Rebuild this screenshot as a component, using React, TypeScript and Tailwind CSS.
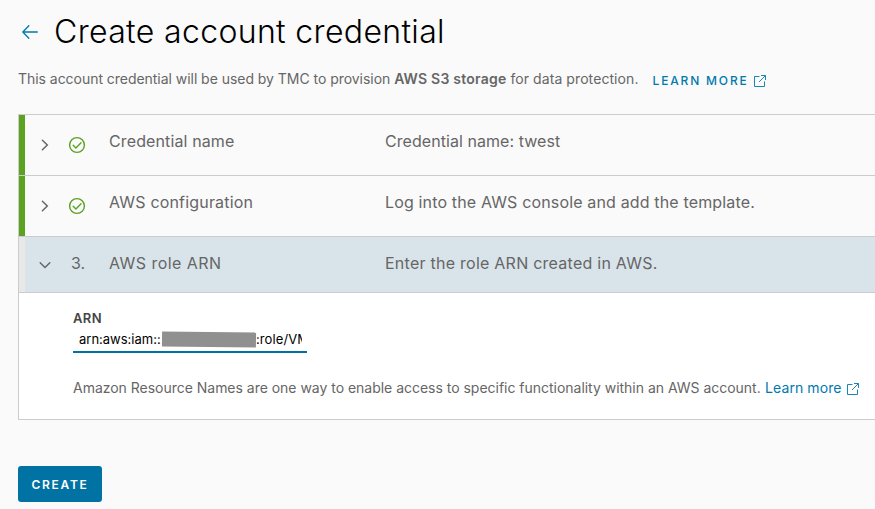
import React from "react";

function ExternalIcon({ className = "" }: { className?: string }) {
  return (
    <svg className={className} width="12" height="12" viewBox="0 0 12 12" fill="none" stroke="#0079ad" strokeWidth="0.9">
      <path d="M5.5 1.5H.5v10h10V6.5M7 .5h4.5V5M11.4.6 5 7" />
    </svg>
  );
}

function CheckIcon() {
  return (
    <svg width="18" height="18" viewBox="0 0 18 18" fill="none" stroke="#5aa220" strokeWidth="1.4">
      <circle cx="9" cy="9" r="7.4" />
      <path d="m5.2 9.3 2.7 2.6 5.1-5.1" strokeLinecap="round" />
    </svg>
  );
}

function Chevron({ open = false }: { open?: boolean }) {
  return (
    <svg width="12" height="12" viewBox="0 0 12 12" fill="none" stroke="#666" strokeWidth="1.5" strokeLinecap="round">
      <path d={open ? "m1.2 3.8 4.8 4.7 4.8-4.7" : "m3.4 1.2 4.9 4.8-4.9 4.8"} />
    </svg>
  );
}

function DoneStep({ title, summary }: { title: React.ReactNode; summary: React.ReactNode }) {
  return (
    <div className="flex h-[61px] items-start border-b border-[#ccc]">
      <div className="h-full w-1.5 bg-[#5aa220]" />
      <div className="ml-[14px] mt-6">
        <Chevron />
      </div>
      <div className="ml-[17px] mt-[21px] w-[41px]">
        <CheckIcon />
      </div>
      <div className="mt-[14px] w-[276px] text-[16px] leading-6">{title}</div>
      <div className="mt-[14px] text-[16px] leading-6">{summary}</div>
    </div>
  );
}

export default function App() {
  return (
    <div className="h-[509px] w-[875px] overflow-hidden whitespace-nowrap bg-[#fafafa] pl-[18px] font-['Inter',sans-serif] text-[#666]">
      <header className="flex h-16 items-start">
        <svg className="ml-1 mt-[25px]" width="16" height="14" viewBox="0 0 16 14" fill="none" stroke="#0079ad" strokeWidth="1.3" strokeLinecap="round" strokeLinejoin="round">
          <path d="M15.3 7H.8M6.8.8.8 7l6 6.2" />
        </svg>
        <h1 className="ml-4 mt-3 text-[32px] font-light leading-10 tracking-[0.35px] text-black">Create account credential</h1>
      </header>

      <div className="flex h-[50px] items-start text-[14px] leading-5">
        <p className="mt-[5px]">
          <span className="tracking-[-0.04px]">This account credential will be used by TMC to provision </span>
          <b className="font-semibold tracking-[0.22px]">AWS S3 storage</b>
          <span className="tracking-[0.08px]"> for data protection.</span>
        </p>
        <a className="ml-[14px] mt-[7px] flex text-[12px] font-medium tracking-[1.83px] text-[#0079ad]">
          LEARN MORE
          <ExternalIcon className="ml-[5px] mt-1" />
        </a>
      </div>

      <section className="h-[306px] border-y border-l border-[#ccc] bg-[#fafafa]">
        <DoneStep
          title={<span className="tracking-[0.12px]">Credential name</span>}
          summary={<span className="tracking-[0.06px]">Credential name: twest</span>}
        />
        <DoneStep
          title={<span className="tracking-[0.18px]">AWS configuration</span>}
          summary={<span className="tracking-[0.15px]">Log into the AWS console and add the template.</span>}
        />
        <div className="flex h-14 items-start border-b border-[#ccc] bg-[#d9e4ea]">
          <div className="h-full w-1.5 bg-[#e8e8e8]" />
          <div className="ml-[14px] mt-[22px]">
            <Chevron open />
          </div>
          <div className="ml-[20px] mt-[14px] w-[38px] text-[16px] leading-6">3.</div>
          <div className="mt-[14px] w-[276px] text-[16px] leading-6 tracking-[0.45px]">AWS role ARN</div>
          <div className="mt-[14px] text-[16px] leading-6 tracking-[0.25px]">Enter the role ARN created in AWS.</div>
        </div>
        <div className="h-[126px] bg-white pl-[54px] pt-[17px]">
          <label className="block text-[13px] font-semibold leading-4 tracking-[0.4px] text-[#454545]">ARN</label>
          <div className="flex h-[27px] w-[234px] items-start border-b-2 border-[#0072a3] pl-1.5 text-[13px] leading-[27px] text-black">
            <span className="w-[83px]">arn:aws:iam::</span>
            <span className="mt-[6px] h-[15px] w-[94px] rotate-[0.7deg] bg-[#909090]" />
            <span className="w-[46px] overflow-hidden tracking-[0.1px]">:role/VM</span>
          </div>
          <p className="mt-[25px] flex text-[14px] leading-5">
            <span className="w-[692px] tracking-[-0.02px]">Amazon Resource Names are one way to enable access to specific functionality within an AWS account.</span>
            <a className="flex text-[#0079ad]">
              <span className="w-[82px] tracking-[0.1px]">Learn more</span>
              <ExternalIcon className="mt-[5px]" />
            </a>
          </p>
        </div>
      </section>

      <button className="mt-[46px] block h-9 w-[84px] rounded-[3px] bg-[#0072a3] pt-[2px] text-[12px] font-semibold tracking-[1.7px] text-white">CREATE</button>
    </div>
  );
}
